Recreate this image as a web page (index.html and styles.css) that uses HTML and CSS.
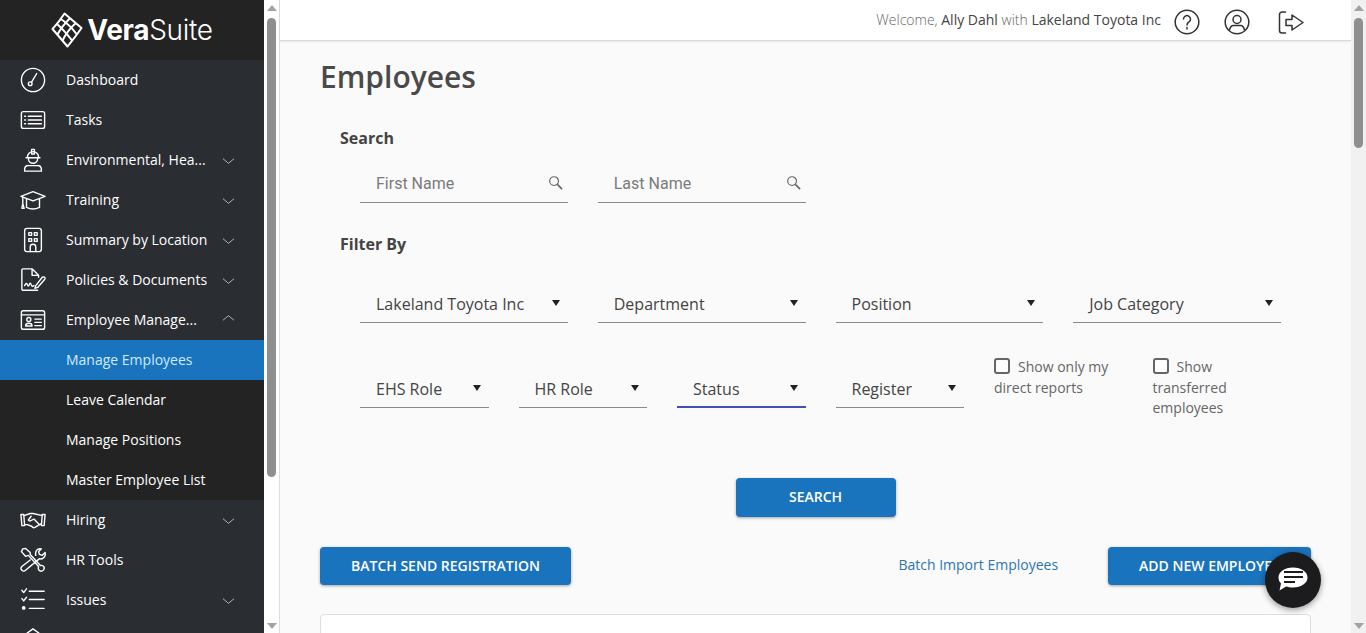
FILE: index.html
```html
<!DOCTYPE html>
<html lang="en">
  <head>
    <meta charset="UTF-8" />
    <meta name="viewport" content="width=device-width, initial-scale=1.0" />
    <title>Employees</title>
    <link rel="stylesheet" href="styles.css">
  </head>
  <body>
    <aside class="sidebar">
      <div class="sidebar-inner">
        <div class="brand">
          <svg class="brand-mark" viewBox="0 0 32 36" fill="none" stroke="#fff" stroke-width="2" stroke-linejoin="round">
            <path d="M13.500 1.500 L30.500 16 Q25 24 16.500 34.500 L1.500 17 Q8 10 13.500 1.500Z" />
            <path d="M9 6.500 Q18 12 25.800 22.300" />
            <path d="M5.700 11.700 Q13 18 21.200 28.700" />
            <path d="M19.200 6 Q11 14 6.200 23" />
            <path d="M24.800 11 Q16 19 11.300 29" />
          </svg>
          <span class="brand-name"><b>Vera</b>Suite</span>
        </div>
        <nav class="menu">
          <a class="item">
            <svg class="icon" viewBox="0 0 28 28"><circle cx="14" cy="14" r="12.5" /><circle cx="11" cy="18" r="2" /><path d="M12.3 16.5 L18 7" /></svg>
            <span class="label">Dashboard</span>
          </a>
          <a class="item">
            <svg class="icon" viewBox="0 0 28 28"><rect x="1.5" y="5" width="25" height="18" rx="2" /><path d="M9 10h14M9 14h14M9 18h14M5 10h1M5 14h1M5 18h1" /></svg>
            <span class="label">Tasks</span>
          </a>
          <a class="item">
            <svg class="icon" viewBox="0 0 28 28"><path d="M8 11 a6 6 0 0 1 12 0" /><path d="M6.500 11.500h15M12.500 2.500h3v5h-3ZM9 12.500 a5 5 0 0 0 10 0M5 26v-2.500 a4 4 0 0 1 4-3.500 h10 a4 4 0 0 1 4 3.500 V26Z" /></svg>
            <span class="label">Environmental, Hea...</span>
            <svg class="chev" viewBox="0 0 14 8"><path d="M1 1.500 L7 6.500 L13 1.500" /></svg>
          </a>
          <a class="item">
            <svg class="icon" viewBox="0 0 28 28"><path d="M1 10 L14 5 L27 10 L14 15 Z" /><path d="M7 13v9 q7 3.500 14 0 v-9M3 11v7M2 23 l1-5 1.500 5Z" /></svg>
            <span class="label">Training</span>
            <svg class="chev" viewBox="0 0 14 8"><path d="M1 1.500 L7 6.500 L13 1.500" /></svg>
          </a>
          <a class="item">
            <svg class="icon" viewBox="0 0 28 28"><rect x="5" y="1.500" width="18" height="25" rx="2.500" /><path d="M9.500 6h3v3h-3zM15.500 6h3v3h-3zM9.500 12.500h3v3h-3zM15.500 12.500h3v3h-3zM11 26.500v-5 a3 3 0 0 1 6 0 v5" /></svg>
            <span class="label">Summary by Location</span>
            <svg class="chev" viewBox="0 0 14 8"><path d="M1 1.500 L7 6.500 L13 1.500" /></svg>
          </a>
          <a class="item">
            <svg class="icon" viewBox="0 0 28 28"><path d="M19 25 H3 a1 1 0 0 1-1-1 V3 a1 1 0 0 1 1-1 h10 l7 7 v2M13 2v7h7M5 20 q2-4 3-1 t2 0 2 0 3 1" /><path d="M17 20 L24 11 q2-1 3 1 q0 1-1 2 L19 22 l-3 1Z" /></svg>
            <span class="label">Policies &amp; Documents</span>
            <svg class="chev" viewBox="0 0 14 8"><path d="M1 1.500 L7 6.500 L13 1.500" /></svg>
          </a>
          <a class="item">
            <svg class="icon" viewBox="0 0 28 28"><rect x="1.500" y="4" width="25" height="20" rx="2" /><path d="M1.500 8.500h25M16 13h7M16 16.500h7M16 20h7M6 20.500 q0-3 3.500-3 t3.500 3Z" /><circle cx="9.500" cy="13.500" r="2.200" /></svg>
            <span class="label">Employee Manage...</span>
            <svg class="chev open" viewBox="0 0 14 8"><path d="M1 6.500 L7 1.500 L13 6.500" /></svg>
          </a>
          <div class="submenu">
            <a class="item active"><span class="label">Manage Employees</span></a>
            <a class="item"><span class="label">Leave Calendar</span></a>
            <a class="item"><span class="label">Manage Positions</span></a>
            <a class="item"><span class="label">Master Employee List</span></a>
          </div>
          <a class="item">
            <svg class="icon" viewBox="0 0 28 28"><path d="M1 8h3l1 12H2ZM27 8h-3l-1 12h3ZM5 9 l6-2 h3 l9 2M23 18 l-7 4 q-2 1-3-1 l-5-2 -3 0M12 10 l-3 4 q1 2 4 0 l2-1 6 6" /></svg>
            <span class="label">Hiring</span>
            <svg class="chev" viewBox="0 0 14 8"><path d="M1 1.500 L7 6.500 L13 1.500" /></svg>
          </a>
          <a class="item">
            <svg class="icon" viewBox="0 0 28 28"><path d="M3 2 L1.500 5 L6 10 L9 9 L20 21 q-1 3 1 4.500 q3 1.500 4.500-1 q1.500-2.500-.500-4 q-1.500-1-3-.500 L11 8 L11 6 L6 1.500Z" /><path d="M17 9 q-1-4 2-6.500 q2-1 4-.500 l-3 3 1 3 3 1 3-3 q1 4-2 6 q-2 1.500-4 .500 L6 25 q-2 2-4 0 q-2-2 0-4 L11 14" /></svg>
            <span class="label">HR Tools</span>
          </a>
          <a class="item">
            <svg class="icon" viewBox="0 0 28 28"><path d="M10 4.500h16M10 13.500h16M10 23h16M2 3.500 l2 2.500 3-4M2 12.500 l2 2.500 3-4" /><circle cx="4" cy="22.500" r="1.300" fill="#fff" /></svg>
            <span class="label">Issues</span>
            <svg class="chev" viewBox="0 0 14 8"><path d="M1 1.500 L7 6.500 L13 1.500" /></svg>
          </a>
          <a class="item">
            <svg class="icon" viewBox="0 0 28 28"><path d="M3 10 L14 2 L25 10 V24 H3Z" /></svg>
          </a>
        </nav>
      </div>
      <div class="scrollbar">
        <span class="arrow up"></span>
        <span class="thumb side-thumb"></span>
        <span class="arrow down"></span>
      </div>
    </aside>

    <div class="page">
      <header class="topbar">
        <p class="welcome">Welcome, <span>Ally Dahl</span> with <span>Lakeland Toyota Inc</span></p>
        <svg class="top-icon" viewBox="0 0 26 26"><circle cx="13" cy="13" r="11.800" /><path d="M9.500 10 a3.500 3.500 0 1 1 5.500 3 q-2 1-2 3M13 18.500v1.500" /></svg>
        <svg class="top-icon" viewBox="0 0 26 26"><circle cx="13" cy="13" r="11.800" /><circle cx="13" cy="10.500" r="4" /><path d="M5.500 21 q1-4.500 4-4.500 h7 q3 0 4 4.500" /></svg>
        <svg class="top-icon exit" viewBox="0 0 26 26"><path d="M7.500 3 H4 a2.500 2.500 0 0 0-2.500 2.500 v16 a2.500 2.500 0 0 0 2.500 2.500 h3.500" /><path d="M8 10.500 h6 V6 l11 7.500 -11 7.500 v-4.500 H8Z" /></svg>
      </header>

      <main class="content">
        <h1 class="title">Employees</h1>

        <section class="filters">
          <h2 class="heading">Search</h2>
          <div class="row four">
            <div class="field search"><span class="hint">First Name</span>
              <svg class="glass" viewBox="0 0 16 16"><circle cx="6.500" cy="6.500" r="4.700" /><path d="M10 10 L15 15" stroke-width="1.800" /></svg>
            </div>
            <div class="field search"><span class="hint">Last Name</span>
              <svg class="glass" viewBox="0 0 16 16"><circle cx="6.500" cy="6.500" r="4.700" /><path d="M10 10 L15 15" stroke-width="1.800" /></svg>
            </div>
          </div>

          <h2 class="heading by">Filter By</h2>
          <div class="row four selects">
            <div class="field"><span>Lakeland Toyota Inc</span><i class="caret"></i></div>
            <div class="field"><span>Department</span><i class="caret"></i></div>
            <div class="field"><span>Position</span><i class="caret"></i></div>
            <div class="field"><span>Job Category</span><i class="caret"></i></div>
          </div>
          <div class="row six">
            <div class="field"><span>EHS Role</span><i class="caret"></i></div>
            <div class="field"><span>HR Role</span><i class="caret"></i></div>
            <div class="field focused"><span>Status</span><i class="caret"></i></div>
            <div class="field"><span>Register</span><i class="caret"></i></div>
            <label class="check"><i class="box"></i>Show only my direct reports</label>
            <label class="check"><i class="box"></i>Show transferred employees</label>
          </div>
        </section>

        <div class="search-action"><button class="btn search-btn">SEARCH</button></div>

        <div class="actions">
          <button class="btn">BATCH SEND REGISTRATION</button>
          <a class="link">Batch Import Employees</a>
          <button class="btn">ADD NEW EMPLOYEE</button>
        </div>

        <div class="card"></div>
      </main>

      <div class="scrollbar page-scroll">
        <span class="arrow up"></span>
        <span class="thumb page-thumb"></span>
        <span class="arrow down"></span>
      </div>
    </div>

    <button class="chat">
      <svg viewBox="0 0 30 24"><path d="M15 .5 C23.500 .5 29.500 5 29.500 10.500 C29.500 16 23.500 20.500 15 20.500 C12.500 20.500 10 20 8 19.500 L1.500 23.500 L3 16.500 C1.500 15 .500 13 .500 10.500 C.500 5 6.500 .500 15 .500Z" fill="#fff" /><path d="M6 5h19M6 10h19M6 15h11" stroke="#1c1c1e" stroke-width="1.800" /></svg>
    </button>
  </body>
</html>
```

FILE: styles.css
```css
* {
  box-sizing: border-box;
}

html,
body {
  height: 100%;
}

body {
  margin: 0;
  display: flex;
  height: 633px;
  overflow: hidden;
  font-family: "Open Sans", sans-serif;
  background: #fafafa;
  color: #444;
}

/* sidebar */
.sidebar {
  width: 280px;
  flex: none;
  display: flex;
  background: #fff;
  border-right: 1px solid #ddd;
}

.sidebar-inner {
  width: 264px;
  flex: none;
  overflow: hidden;
  background: #2a2d32;
}

.brand {
  height: 60px;
  background: #232323;
  display: flex;
  align-items: center;
  justify-content: center;
  gap: 4px;
}

.brand-mark {
  width: 32px;
  height: 36px;
}

.brand-name {
  font-family: Inter, sans-serif;
  font-weight: 300;
  font-size: 28px;
  letter-spacing: -0.3px;
  color: #fff;
}

.brand-name b {
  font-weight: 700;
}

.item {
  display: flex;
  align-items: center;
  height: 40px;
  padding-left: 20px;
  color: #fff;
  font-size: 14px;
}

.icon {
  width: 26px;
  height: 26px;
  flex: none;
  margin-right: 20px;
  fill: none;
  stroke: #fff;
  stroke-width: 1.500;
  stroke-linecap: round;
  stroke-linejoin: round;
}

.label {
  flex: 1;
  white-space: nowrap;
  margin-top: -2px;
}

.chev {
  width: 13px;
  height: 8px;
  flex: none;
  margin-right: 29px;
  margin-top: 2px;
  fill: none;
  stroke: #bbb;
  stroke-width: 1;
}

.chev.open {
  margin-top: -4px;
}

.submenu {
  background: #232323;
}

.submenu .item {
  padding-left: 66px;
}

.submenu .active {
  background: #1a73bd;
  color: #cfeaff;
}

/* scrollbars */
.scrollbar {
  width: 15px;
  flex: none;
  display: flex;
  flex-direction: column;
  align-items: center;
  background: #f1f1f1;
}

.sidebar .scrollbar {
  background: #fff;
}

.arrow {
  width: 0;
  height: 0;
  flex: none;
  border-left: 5px solid transparent;
  border-right: 5px solid transparent;
}

.up {
  margin-top: 5px;
  border-bottom: 6px solid #a3a3a3;
}

.down {
  margin-top: auto;
  margin-bottom: 4px;
  border-top: 6px solid #a3a3a3;
}

.thumb {
  width: 9px;
  flex: none;
  margin-top: 7px;
  border-radius: 5px;
  background: #8f8f8f;
}

.side-thumb {
  height: 459px;
}

.page-thumb {
  height: 130px;
}

/* page */
.page {
  flex: 1;
  min-width: 0;
  position: relative;
  padding-right: 15px;
}

.page-scroll {
  position: absolute;
  top: 0;
  right: 0;
  bottom: 0;
}

.topbar {
  height: 41px;
  display: flex;
  align-items: center;
  padding-right: 47px;
  background: #fff;
  border-bottom: 1px solid #d9d9d9;
  box-shadow: 0 1px 2px rgba(0, 0, 0, 0.08);
}

.welcome {
  margin: 0 13px 2px auto;
  font-size: 14px;
  font-weight: 300;
  color: #666;
}

.welcome span {
  font-weight: 400;
  color: #444;
}

.top-icon {
  width: 26px;
  height: 26px;
  margin-left: 0;
  margin-top: 4px;
  fill: none;
  stroke: #333;
  stroke-width: 1.500;
  stroke-linejoin: round;
  stroke-linecap: round;
}

.top-icon + .top-icon {
  margin-left: 24px;
}

.top-icon.exit {
  margin-left: 28px;
}

.content {
  padding: 0 40px;
}

.title {
  margin: 0;
  padding-top: 16px;
  height: 79px;
  font-size: 30px;
  line-height: 40px;
  font-weight: 600;
  color: #4a4a4a;
}

.filters {
  padding-left: 20px;
}

.heading {
  margin: 0;
  font-size: 16px;
  line-height: 22px;
  font-weight: 700;
  color: #444;
  height: 22px;
  margin-top: 7px;
}

.heading.by {
  margin-top: 30px;
}

.row {
  display: grid;
  gap: 30px;
  width: 921px;
  margin-left: 20px;
}

.four {
  grid-template-columns: repeat(4, 1fr);
  margin-top: 14px;
}

.selects {
  margin-top: 28px;
}

.six {
  grid-template-columns: repeat(6, 1fr);
  margin-top: 35px;
  height: 66px;
}

.field {
  position: relative;
  height: 40px;
  padding: 2px 16px 0;
  display: flex;
  align-items: center;
  justify-content: space-between;
  border-bottom: 1px solid #8a8a8a;
  font-size: 16px;
  color: #444;
  white-space: nowrap;
}

.six .field {
  margin-top: 10px;
}

.field.focused {
  padding-top: 3px;
  border-bottom: 2px solid #3f51b5;
}

.hint {
  font-family: Roboto, sans-serif;
  color: #7b7b7b;
}

.glass {
  width: 15px;
  height: 15px;
  margin-right: -11px;
  margin-top: -2px;
  fill: none;
  stroke: #666;
  stroke-width: 1.200;
}

.caret {
  width: 0;
  height: 0;
  margin-right: -8px;
  margin-top: -2px;
  flex: none;
  border-left: 4.500px solid transparent;
  border-right: 4.500px solid transparent;
  border-top: 6px solid #222;
}

.check {
  display: block;
  font-size: 14px;
  line-height: 20.500px;
  color: #666;
  margin-top: -1px;
}

.box {
  display: inline-block;
  width: 16px;
  height: 16px;
  margin-right: 8px;
  vertical-align: -2px;
  border: 2px solid #666;
  border-radius: 3px;
  background: #fff;
}

.search-action {
  display: flex;
  justify-content: center;
  margin-top: 54px;
}

.btn {
  height: 38px;
  padding: 0 31px 2px;
  border: 0;
  border-radius: 4px;
  background: #1a73bd;
  color: #fff;
  font-family: "Open Sans", sans-serif;
  font-size: 14px;
  font-weight: 600;
  box-shadow: 0 1px 3px rgba(0, 0, 0, 0.35);
}

.search-btn {
  width: 160px;
  height: 39px;
}

.actions {
  display: flex;
  align-items: center;
  margin-top: 30px;
}

.actions .link {
  margin-left: auto;
  margin-right: 50px;
  padding-bottom: 4px;
  font-size: 14px;
  color: #2e75b0;
}

.card {
  height: 200px;
  margin-top: 29px;
  background: #fff;
  border: 1px solid #ddd;
  border-radius: 4px;
}

/* floating chat button */
.chat {
  position: fixed;
  left: 1265px;
  top: 552px;
  width: 56px;
  height: 56px;
  padding: 0 0 3px;
  border: 0;
  border-radius: 50%;
  background: #1c1c1e;
  box-shadow: 0 2px 6px rgba(0, 0, 0, 0.4);
  display: flex;
  align-items: center;
  justify-content: center;
}

.chat svg {
  width: 30px;
  height: 24px;
}
```
